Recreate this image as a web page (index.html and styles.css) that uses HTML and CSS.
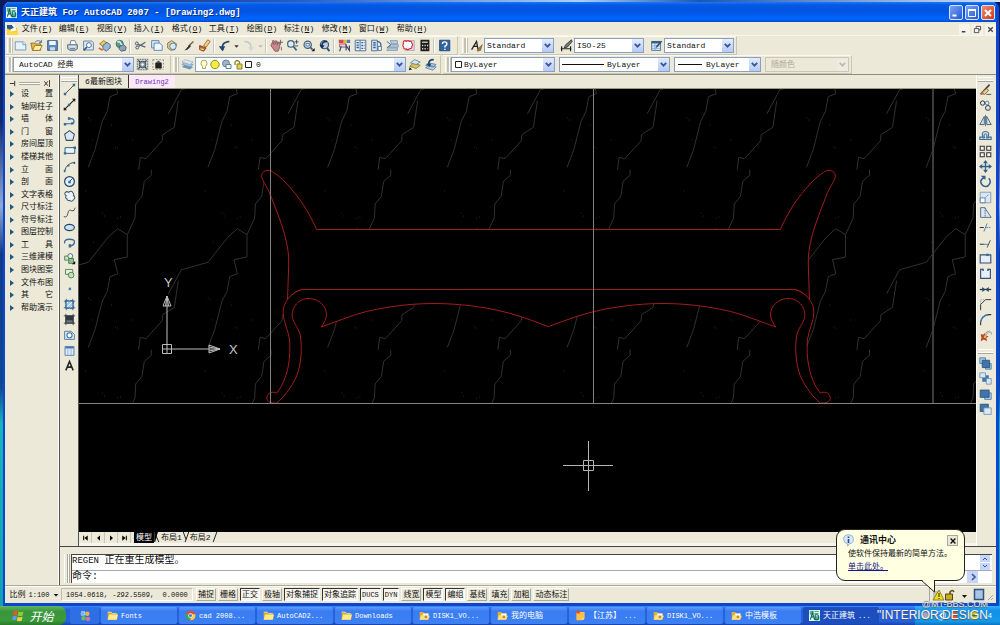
FILE: index.html
```html
<!DOCTYPE html>
<html lang="zh-CN">
<head>
<meta charset="utf-8">
<title>天正建筑 For AutoCAD 2007 - [Drawing2.dwg]</title>
<link rel="stylesheet" href="styles.css">
</head>
<body>
<svg class="defs" aria-hidden="true">
  <defs>
    <symbol id="chev" viewBox="0 0 10 12"><path d="M2.500 4.500 5 7l2.500-2.500" fill="none" stroke="#3a5795" stroke-width="1.700"/></symbol>
    <symbol id="folder" viewBox="0 0 16 16"><path d="M1 3h5l2 2h7v9H1z" fill="#d9a92c"/><path d="M1 14 3 6.500h13L14 14z" fill="#fdeb8e"/><path d="M1 3h5l2 2h6" fill="none" stroke="#fff3b0"/></symbol>
    <symbol id="folderopen" viewBox="0 0 16 16"><path d="M1 3h5l2 2h6v9H1z" fill="#e0ae35"/><path d="M6 5h8l-1 6H6z" fill="#fff"/><path d="M1 14 3 7.500h6l1 1h6L13 14z" fill="#fbe08a"/><circle cx="10" cy="10" r="2" fill="#c98b2b"/></symbol>
    <symbol id="app" viewBox="0 0 16 16"><path d="M0 0h16v16H0z" fill="#e8fbf2"/><path d="M1 1h6v6H1zM9 9h6v6H9z" fill="#5fae94"/><path d="M2 14 5 4l3 10M3 10h4M9 14V7h3q2 0 2 3.500T12 14z" fill="none" stroke="#0d6f5d" stroke-width="1.600"/><path d="M8 2h6M8 5h6" stroke="#0d6f5d"/></symbol>
    <symbol id="tri" viewBox="0 0 6 6"><path d="M1 0v6l4-3z" fill="#1c5a80"/></symbol>
    <g id="vein">
      <path d="M71.300 81.700V87.300L64.300 93.300 62 108.300 55.700 116 55 130 47.300 146.700V169L34.300 171.700 37.700 185.700 30 188.700 27.300 203.300 22.300 213 15 241.700 8.300 259.300"/>
      <path d="M47.300 146.700 37.700 140.700 28.300 149 8.300 174.300-18.300 181.700-31.300 205.700"/>
      <path d="M98.300 12.700 94.300 39.300 82.700 46.700 82.300 52.700 66 70.700 60.300 69.300 58.700 81.700"/>
      <path d="M8 30h1M10 32h1M37 60h1M35 59h1M12 52h1M52 52h1M22 125h1M37 130h1M40 129h1M13 154h1M5 103h1M31 37h1M24 128h1" stroke-width=".8"/>
    </g>
    <g id="veinrow">
      <use href="#vein"/><use href="#vein" x="119.700"/><use href="#vein" x="239.400"/><use href="#vein" x="359.100"/><use href="#vein" x="478.800"/><use href="#vein" x="598.500"/><use href="#vein" x="718.200"/><use href="#vein" x="837.900"/>
    </g>
    <g id="half">
      <path d="M549 229.500H316.700C311 217 306 208 298.300 197.500 290 187 282 177.500 273.500 172.500 268 167.500 260.500 171.500 261.800 177.500 263 182 268 187 273.500 203 283 227 289.500 246 288.700 265L287.500 300.500C290 295.500 296 290.500 302.500 289.500H549"/>
      <path d="M549 289.500H302.500C292 291.500 282 303 283.200 313 283.500 322 288 329 289.700 341 290.500 356 289 372 281 387L276.700 393.200C273 391 267.500 392.500 266.800 397.500 266.500 401 270 403 273.500 403H276.700C284 397 291 388 296.700 376 301.500 363 302 349 300.500 336 298 325 291.500 323 292.200 313 294 303 302 298 309.500 298.500 319 299 326.500 306 326.500 315 326 320 323.500 324 321 327 336 322 352 315 366.500 311.500 409 301.500 450 301 494 309.500 514 313.500 531 320 548.500 326.700"/>
    </g>
  </defs>
</svg>

<div class="desktop">
<div class="window">
  <header class="titlebar">
    <svg class="appicon"><use href="#app"/></svg>
    <h1>天正建筑 For AutoCAD 2007 - [Drawing2.dwg]</h1>
    <div class="winbtns">
      <button aria-label="最小化"><svg viewBox="0 0 12 12"><path d="M2.500 8.500h4" stroke="#fff" stroke-width="2"/></svg></button>
      <button aria-label="最大化"><svg viewBox="0 0 12 12"><path d="M2.500 3h7v6.500h-7z" fill="none" stroke="#fff"/><path d="M2 3h8" stroke="#fff" stroke-width="2"/></svg></button>
      <button class="close" aria-label="关闭"><svg viewBox="0 0 12 12"><path d="m3 3 6 6M9 3 3 9" stroke="#fff" stroke-width="1.800"/></svg></button>
    </div>
  </header>

  <nav class="menubar">
    <svg class="docicon" viewBox="0 0 16 16"><path d="M0 6h15v10H0z" fill="#f5c71d"/><path d="m4 3 7-2 3 9-8 2z" fill="#fff"/><path d="M0 2h7l3 4-6 3-4-2z" fill="#28568e"/><path d="M0 9h5l2 3h9v4H0z" fill="#ffd83a"/></svg>
    <button>文件(<u>F</u>)</button><button>编辑(<u>E</u>)</button><button>视图(<u>V</u>)</button><button>插入(<u>I</u>)</button><button>格式(<u>O</u>)</button><button>工具(<u>T</u>)</button><button>绘图(<u>D</u>)</button><button>标注(<u>N</u>)</button><button>修改(<u>M</u>)</button><button>窗口(<u>W</u>)</button><button>帮助(<u>H</u>)</button>
    <div class="mdi">
      <button aria-label="最小化文档"><svg viewBox="0 0 10 10"><path d="M2 7.500h4" stroke="#444" stroke-width="1.500"/></svg></button>
      <button aria-label="还原文档"><svg viewBox="0 0 10 10"><path d="M3.500 3.500V1.500h5v4H6.500M1.500 4h5v4.500h-5z" fill="none" stroke="#444"/></svg></button>
      <button aria-label="关闭文档"><svg viewBox="0 0 10 10"><path d="m2.500 2.500 5 5M7.500 2.500l-5 5" stroke="#444" stroke-width="1.500"/></svg></button>
    </div>
  </nav>

  <div class="bar">
    <div class="group wide">
      <i class="grip"></i>
      <button class="t" aria-label="新建"><svg viewBox="0 0 16 16"><path d="M1.500 3.500h10l3 3v7h-13z" fill="#e8f2fc" stroke="#5d8cb5"/><path d="M11 3.500v3.500h3.500" fill="#fff" stroke="#5d8cb5"/></svg></button>
      <button class="t" aria-label="打开"><svg viewBox="0 0 16 16"><path d="M1 5h5l1 1h6v8H3z" fill="#e7b64c" stroke="#8b6a1f"/><path d="m3 14 3-6h9l-3 6z" fill="#fff0a8" stroke="#8b6a1f"/><path d="M6 4q4-4 8 0M14 1v3.500h-3" fill="none" stroke="#356596"/></svg></button>
      <button class="t" aria-label="保存"><svg viewBox="0 0 16 16"><path d="M2 2h12v12H2z" fill="#5d8cc0" stroke="#27517f"/><path d="M4 2.500h8v5H4z" fill="#eef5fc"/><path d="M5 10h6v4H5z" fill="#cfdbe8"/></svg></button>
      <i class="sep"></i>
      <button class="t" aria-label="打印"><svg viewBox="0 0 16 16"><path d="M5 7 6 2h5l2 5" fill="#fff" stroke="#59718c"/><path d="M2 7h12v5l-3 2H5l-3-2z" fill="#b9c7d8" stroke="#485f7c"/><path d="M4 9.500h8" stroke="#fff"/><path d="M5 12h6" stroke="#485f7c"/></svg></button>
      <button class="t" aria-label="打印预览"><svg viewBox="0 0 16 16"><path d="M2 2.500h10l2 2v9H2z" fill="#dceafa" stroke="#4a73a1"/><circle cx="8.500" cy="7.500" r="3" fill="#fff" stroke="#34567d"/><path d="m6 10-4 4" stroke="#34567d" stroke-width="1.800"/></svg></button>
      <button class="t" aria-label="发布"><svg viewBox="0 0 16 16"><path d="m2 6 5-4 4 3-5 4z" fill="#f0cd51" stroke="#8b6b1c"/><path d="m6 8 5-4 4 3v4l-5 4-4-3z" fill="#9bb8d9" stroke="#3d5f89"/><path d="m1 11 5 3" stroke="#d36b2c" stroke-width="2"/></svg></button>
      <button class="t" aria-label="三维 DWF"><svg viewBox="0 0 16 16"><circle cx="7" cy="6" r="4.500" fill="#58a06a" stroke="#376a8a"/><path d="M4 4q3-2 4 1t3 2" stroke="#cfe8f6" stroke-width="2" fill="none"/><path d="m7 9 5-2 3 3-1 4-5 1-3-3z" fill="#8ba3c0" stroke="#39516e"/></svg></button>
      <i class="sep"></i>
      <button class="t" aria-label="剪切"><svg viewBox="0 0 16 16"><path d="m14 4-8 5M14 10 5 6.500" stroke="#5a6673" stroke-width="1.600"/><circle cx="3.500" cy="5.500" r="1.800" fill="none" stroke="#27425f"/><circle cx="4" cy="10.500" r="1.800" fill="none" stroke="#27425f"/></svg></button>
      <button class="t" aria-label="复制"><svg viewBox="0 0 16 16"><path d="M2 2h9v9H2z" fill="#dceafa" stroke="#4a73a1"/><path d="M5 5h7l3 3v6H5z" fill="#eef6fd" stroke="#4a73a1"/></svg></button>
      <button class="t" aria-label="粘贴"><svg viewBox="0 0 16 16"><path d="m2 5 5-3 6 4-2 7-5 1-4-3z" fill="#e5cf8e" stroke="#7a6a35"/><circle cx="8.500" cy="9" r="4" fill="#d9e8f7" stroke="#4b6e94"/></svg></button>
      <button class="t" aria-label="特性匹配"><svg viewBox="0 0 16 16"><path d="m14 3-6 6" stroke="#6b5a44" stroke-width="1.600"/><path d="m9.500 7-6.500 7 4-1 4-4z" fill="#2e2c2a"/></svg></button>
      <button class="t" aria-label="块编辑器"><svg viewBox="0 0 16 16"><path d="m7 8 5-7 3 2-5 7z" fill="#f6d67c" stroke="#9b5a22"/><path d="m2 8 8 3-3 4-5-2z" fill="#c9662e" stroke="#773515"/><path d="m3 12 4 1" stroke="#ffe09c" stroke-width="1.500"/></svg></button>
      <i class="sep"></i>
      <button class="t" aria-label="放弃"><svg viewBox="0 0 16 16"><path d="M6 14Q3 4 14 3" fill="none" stroke="#21436c" stroke-width="2"/><path d="m1 9 4.500 6L9 9z" fill="#21436c"/></svg></button>
      <button class="drop" aria-label="放弃列表"><svg viewBox="0 0 8 16"><path d="M1.500 7h5L4 10z" fill="#333"/></svg></button>
      <button class="t" aria-label="重做"><svg viewBox="0 0 16 16"><path d="M3 3q9 0 8 9" fill="none" stroke="#bfc6cb" stroke-width="1.800"/><path d="m7 10 4 5 4-5z" fill="#d3d8d9"/></svg></button>
      <button class="drop" aria-label="重做列表"><svg viewBox="0 0 8 16"><path d="M1.500 7h5L4 10z" fill="#bbb"/></svg></button>
      <i class="sep"></i>
      <button class="t" aria-label="实时平移"><svg viewBox="0 0 16 16"><path d="m3 4 2 3-2-5h2l2 4V2l2 1v4l1-3 2 1v5l-2 5H6L1 8z" fill="#c08a8e" stroke="#8c4e57"/><path d="M13 1v6M10 4h6M14 10v4" stroke="#555"/></svg></button>
      <button class="t" aria-label="实时缩放"><svg viewBox="0 0 16 16"><circle cx="6" cy="6" r="4" fill="#dcebf8" stroke="#42627f" stroke-width="1.500"/><path d="m9 9 4 5" stroke="#42627f" stroke-width="2.200"/><path d="M10.500 3.500h5M13 1v5M11 8.500h4" stroke="#26394f"/></svg></button>
      <button class="t" aria-label="窗口缩放"><svg viewBox="0 0 16 16"><circle cx="7" cy="7" r="4.500" fill="#cfe2f4" stroke="#42627f" stroke-width="1.500"/><path d="M5 5.500h4v3H5z" fill="#fff" stroke="#42627f"/><path d="m10 10 3 3" stroke="#42627f" stroke-width="2.200"/><path d="M15.500 11v4h-4z" fill="#111"/></svg></button>
      <button class="t" aria-label="缩放上一个"><svg viewBox="0 0 16 16"><circle cx="8" cy="7" r="5" fill="#b8cde2" stroke="#34567d" stroke-width="1.500"/><path d="m11 11 3 4" stroke="#34567d" stroke-width="2.500"/><path d="M11 3Q4 3 5 9" fill="none" stroke="#122d50" stroke-width="1.800"/><path d="m2 7 3 5 3-4z" fill="#122d50"/></svg></button>
      <i class="sep"></i>
      <button class="t" aria-label="特性"><svg viewBox="0 0 16 16"><path d="M1 1h6v4H1z" fill="#d8474b"/><path d="M7 1h4v4H7z" fill="#e0b838"/><path d="M11 1h4v4h-4z" fill="#507dbb"/><path d="M2 6h8v4H2z" fill="#e8c7cc" stroke="#8a5566"/><path d="m4 9-2 6M10 14V8l4 6V8" fill="none" stroke="#394f73" stroke-width="1.500"/></svg></button>
      <button class="t" aria-label="设计中心"><svg viewBox="0 0 16 16"><path d="M1.500 1.500h13v13h-13z" fill="#e9f2fb" stroke="#315f8e"/><path d="M7.500 2v12" stroke="#315f8e"/><path d="M3 4.500h3M3 7.500h3M3 10.500h3M9 4.500h2M12 4.500h1M9 8h2M12 8h1M9 11.500h2M12 11.500h1" stroke="#315f8e" stroke-width="1.700"/></svg></button>
      <button class="t" aria-label="工具选项板"><svg viewBox="0 0 16 16"><path d="M2 1.500h7v13H2z" fill="#d8e7f6" stroke="#315f8e"/><path d="M4 4.500h3M4 7.500h3M4 10.500h3" stroke="#315f8e" stroke-width="1.800"/><path d="M9 3q6 1 4 7" fill="none" stroke="#315f8e" stroke-width="1.500"/><path d="M10 9h4v5h-4z" fill="#fff" stroke="#315f8e"/></svg></button>
      <button class="t" aria-label="图纸集"><svg viewBox="0 0 16 16"><path d="M5 2h9v4H7zM6 7h9v3H3zM3 11h11v3H1z" fill="#b9cfe3" stroke="#7793ae"/><path d="m1 3 5 4-5 4" fill="none" stroke="#48698c" stroke-width="1.200"/></svg></button>
      <button class="t" aria-label="标记集"><svg viewBox="0 0 16 16"><path d="M4 2h11v12H4z" fill="#f0dce2" stroke="#9b9aa8"/><path d="M2 3q2-2 3 0 3-2 4 0 3-1 3 2 2 2 0 4 1 3-3 3-2 2-4 0-3 1-3-2-2-2 0-4-1-1 0-3z" fill="#fff" stroke="#d02d45" stroke-width="1.400"/></svg></button>
      <button class="t" aria-label="计算器"><svg viewBox="0 0 16 16"><path d="M3 1h11v14H3z" fill="#1d1d1d"/><path d="M5 3h7v2H5z" fill="#b3c997"/><path d="M5 8h1.500M8 8h1.500M11 8h1.500M5 12h1.500M8 12h1.500" stroke="#ddd" stroke-width="1.800"/><path d="M11 12h1.500" stroke="#d44" stroke-width="1.800"/></svg></button>
      <i class="sep"></i>
      <button class="t" aria-label="帮助"><svg viewBox="0 0 16 16"><path d="M2 1.500h12.500v13H2z" fill="#2f66a2" stroke="#173d6c"/><path d="M5.500 6q0-2.500 2.700-2.500T11 6q0 1.300-2.500 3v1.500M8.500 12v1.500" fill="none" stroke="#fff" stroke-width="1.700"/></svg></button>
    </div>
    <div class="group">
      <i class="grip"></i>
      <button class="t" aria-label="文字样式"><svg viewBox="0 0 16 16"><path d="m2 13 6-10 2 10M4 9h5" fill="none" stroke="#222" stroke-width="1.600"/><path d="m15 7-5 5-1 3 4-1z" fill="#a87a3a" stroke="#4e3717" stroke-width=".6"/></svg></button>
      <label class="combo c70"><select aria-label="文字样式"><option>Standard</option></select><span class="arrow"><svg><use href="#chev"/></svg></span></label>
      <i class="sep"></i>
      <button class="t" aria-label="标注样式"><svg viewBox="0 0 16 16"><path d="M1 12h13M2 9v6M13 9v6" stroke="#222" stroke-width="1.500"/><path d="m14 1-7 6-2 4 4-1 6-7z" fill="#777" stroke="#333"/></svg></button>
      <label class="combo c70"><select aria-label="标注样式"><option>ISO-25</option></select><span class="arrow"><svg><use href="#chev"/></svg></span></label>
      <i class="sep"></i>
      <button class="t" aria-label="表格样式"><svg viewBox="0 0 16 16"><path d="M2 3h11v11H2z" fill="#e4effb" stroke="#315f8e"/><path d="M2 4h11" stroke="#315f8e" stroke-width="3"/><path d="M2 8.500h11M2 11.500h11M6 6v8" stroke="#7aa1c6"/><path d="m15 3-6 7-2 1 1-3 6-6z" fill="#334d68"/></svg></button>
      <label class="combo c70"><select aria-label="表格样式"><option>Standard</option></select><span class="arrow"><svg><use href="#chev"/></svg></span></label>
    </div>
  </div>

  <div class="bar">
    <div class="group ws">
      <i class="grip"></i>
      <label class="combo c120"><select aria-label="工作空间"><option>AutoCAD 经典</option></select><span class="arrow"><svg><use href="#chev"/></svg></span></label>
      <button class="t" aria-label="工作空间设置"><svg viewBox="0 0 16 16"><path d="M1.500 1.500h13v13h-13z" fill="#c8cdd0" stroke="#555" stroke-dasharray="2 1"/><circle cx="8" cy="8" r="4" fill="#8896a3" stroke="#2b3d50"/><circle cx="8" cy="8" r="1.500" fill="#fff"/><path d="m3 3 2 2M13 3l-2 2M3 13l2-2M13 13l-2-2" stroke="#2b3d50" stroke-width="1.500"/></svg></button>
      <button class="t" aria-label="我的工作空间"><svg viewBox="0 0 16 16"><path d="M1 2h13M1 2v12M14 2v12M1 14h13" stroke="#777" stroke-dasharray="2 2"/><path d="M4 6h8v7H4z" fill="#222"/><path d="m4 6 4-3 4 3z" fill="#555"/></svg></button>
    </div>
    <div class="group layers">
      <i class="grip"></i>
      <button class="t" aria-label="图层特性管理器"><svg viewBox="0 0 16 16"><path d="m1 11 4-3 10 3-4 3z" fill="#6e98bb"/><path d="m1 8 4-3 10 3-4 3z" fill="#a8c3d9" stroke="#557b9d" stroke-width=".6"/><path d="m1 5 4-3 10 3-4 3z" fill="#dae7f0" stroke="#7796b1" stroke-width=".6"/></svg></button>
      <label class="combo grow"><select class="deep" aria-label="图层"><option>0</option></select>
        <span class="over"><svg viewBox="0 0 60 13"><path d="M8 2q3 0 3 3.500 0 1.500-1.500 3v2h-3v-2Q5 7 5 5.500 5 2 8 2z" fill="#ffffb8" stroke="#8a8a55" stroke-width=".8"/><circle cx="19" cy="6.500" r="4.200" fill="#f3ee3c" stroke="#7d8b22"/><circle cx="30" cy="5.500" r="3.500" fill="#9fb6c4" stroke="#637f93"/><path d="M30 6.500h5v4h-5z" fill="#eef4f8" stroke="#637f93"/><path d="M39 7V4q2-3 4.500 0v3" fill="none" stroke="#8a8328" stroke-width="1.300"/><path d="M41 6h5v5h-5z" fill="#ded35b" stroke="#8a8328"/><path d="M49.500 3.500h6v6h-6z" fill="#fff" stroke="#222"/></svg></span>
        <span class="arrow"><svg><use href="#chev"/></svg></span></label>
      <button class="t" aria-label="将对象的图层置为当前"><svg viewBox="0 0 16 16"><path d="m2 10 5-4 8 3-5 4z" fill="#d8c554" stroke="#7d7a2e"/><path d="m3 6 5-4 7 3-5 3z" fill="#d8e5ef" stroke="#557b9d"/><path d="m1 15 4-1-3-3z" fill="#222"/></svg></button>
      <button class="t" aria-label="上一个图层"><svg viewBox="0 0 16 16"><path d="m2 12 4-3 9 2-4 4zM2 9l4-3 9 2-4 3z" fill="#b8cddd" stroke="#557b9d"/><path d="M12 2Q5 2 6 8" fill="none" stroke="#21436c" stroke-width="2"/><path d="m3 7 3.500 4L9 7z" fill="#21436c"/></svg></button>
    </div>
    <div class="group">
      <i class="grip"></i>
      <label class="combo c104"><select class="box" aria-label="颜色"><option>ByLayer</option></select><span class="over"><svg viewBox="0 0 60 13"><path d="M3.500 3.500h6v6h-6z" fill="#fff" stroke="#222"/></svg></span><span class="arrow"><svg><use href="#chev"/></svg></span></label>
      <i class="sep"></i>
      <label class="combo c110"><select class="line1" aria-label="线型"><option>ByLayer</option></select><span class="over"><svg viewBox="0 0 60 13"><path d="M2 6.500h42" stroke="#111"/></svg></span><span class="arrow"><svg><use href="#chev"/></svg></span></label>
      <i class="sep"></i>
      <label class="combo c88"><select class="line2" aria-label="线宽"><option>ByLayer</option></select><span class="over"><svg viewBox="0 0 60 13"><path d="M3 6.500h24" stroke="#111"/></svg></span><span class="arrow"><svg><use href="#chev"/></svg></span></label>
      <i class="sep"></i>
      <label class="combo c84 off"><select aria-label="打印样式" disabled><option>随颜色</option></select><span class="arrow"><svg viewBox="0 0 10 12"><path d="M2.500 4.500 5 7l2.500-2.500" fill="none" stroke="#bbb" stroke-width="1.700"/></svg></span></label>
    </div>
  </div>

  <div class="workspace">
    <aside class="palette">
      <div class="palhead"><svg viewBox="0 0 8 8"><path d="M1 4h5M6.500 1v6" stroke="#222"/></svg><i></i><button aria-label="关闭工具箱"><svg viewBox="0 0 8 8"><path d="m1.500 1.500 4 5M5.500 1.500l-4 5M7.500 0v8" stroke="#222"/></svg></button></div>
      <div class="pallist">
        <button><svg><use href="#tri"/></svg>设　　置</button><button><svg><use href="#tri"/></svg>轴网柱子</button><button><svg><use href="#tri"/></svg>墙　　体</button><button><svg><use href="#tri"/></svg>门　　窗</button><button><svg><use href="#tri"/></svg>房间屋顶</button><button><svg><use href="#tri"/></svg>楼梯其他</button><button><svg><use href="#tri"/></svg>立　　面</button><button><svg><use href="#tri"/></svg>剖　　面</button><button><svg><use href="#tri"/></svg>文字表格</button><button><svg><use href="#tri"/></svg>尺寸标注</button><button><svg><use href="#tri"/></svg>符号标注</button><button><svg><use href="#tri"/></svg>图层控制</button><button><svg><use href="#tri"/></svg>工　　具</button><button><svg><use href="#tri"/></svg>三维建模</button><button><svg><use href="#tri"/></svg>图块图案</button><button><svg><use href="#tri"/></svg>文件布图</button><button><svg><use href="#tri"/></svg>其　　它</button><button><svg><use href="#tri"/></svg>帮助演示</button>
      </div>
    </aside>

    <div class="right">
      <div class="upper">
        <div class="vtool">
          <i class="hgrip"></i>
          <div class="vlist n19">
            <button aria-label="直线"><svg viewBox="0 0 16 16"><path d="M3 13 13 3" stroke="#333"/><path d="M1 12h3v3H1zM12 1h3v3h-3z" fill="#326a98"/></svg></button>
            <button aria-label="构造线"><svg viewBox="0 0 16 16"><path d="M1 15 15 1" stroke="#222" stroke-width="1.400"/><path d="M6 7h3v3H6z" fill="#326a98"/><path d="M1 15v-4l4 4zM15 1v4l-4-4z" fill="#222"/></svg></button>
            <button aria-label="多段线"><svg viewBox="0 0 16 16"><path d="M2 12h9q4-1 2-5-2-2-5-1" fill="none" stroke="#326a98" stroke-width="1.500"/><path d="M1 11h3v3H1zM10 10h3v3h-3zM6 4h3v3H6z" fill="#326a98"/></svg></button>
            <button aria-label="正多边形"><svg viewBox="0 0 16 16"><path d="m8 2 6 4.500L12 14H4L2 6.500z" fill="#dbe9f5" stroke="#3b4f63" stroke-width="1.300"/></svg></button>
            <button aria-label="矩形"><svg viewBox="0 0 16 16"><path d="M2.500 4.500h12v7h-12z" fill="#edf4fa" stroke="#3b5a78" stroke-width="1.200"/><path d="M1 10h3v3H1zM13 3h3v3h-3z" fill="#326a98"/></svg></button>
            <button aria-label="圆弧"><svg viewBox="0 0 16 16"><path d="M2 14Q4 4 14 3" fill="none" stroke="#333"/><path d="M1 12h2v3H1zM5 6h3v2H5zM13 2h2v3h-2z" fill="#326a98"/></svg></button>
            <button aria-label="圆"><svg viewBox="0 0 16 16"><circle cx="8" cy="8" r="6" fill="#e3eff9" stroke="#27496c" stroke-width="1.500"/><path d="m8 8 4-4" stroke="#333"/><path d="M6.500 7h3v3h-3z" fill="#326a98"/></svg></button>
            <button aria-label="修订云线"><svg viewBox="0 0 16 16"><path d="M4 7Q1 5 3 3t4 0q3-3 5 0t1 4q3 2 0 5-2 3-5 1-3 0-3-2-3-1-1-4z" fill="#edf4fa" stroke="#3b5a78" stroke-width="1.300"/></svg></button>
            <button aria-label="样条曲线"><svg viewBox="0 0 16 16"><path d="M1 13Q5 15 6 9t5-3q3 1 4-4" fill="none" stroke="#333"/></svg></button>
            <button aria-label="椭圆"><svg viewBox="0 0 16 16"><ellipse cx="8" cy="8" rx="6" ry="3.800" fill="#cfe2f3" stroke="#27496c" stroke-width="1.400"/></svg></button>
            <button aria-label="椭圆弧"><svg viewBox="0 0 16 16"><path d="M2 9Q1 4 8 4t6 4-5 4" fill="none" stroke="#3b6c96" stroke-width="1.600"/><path d="M7 10h3v4H7z" fill="#326a98"/></svg></button>
            <button aria-label="插入块"><svg viewBox="0 0 16 16"><path d="M2 5h6v5H2z" fill="#cfe5c2" stroke="#3c7546"/><circle cx="9" cy="5" r="3" fill="#e9f3e4" stroke="#3b5a78"/><path d="M7 8h6v6H7z" fill="#92bd8c" stroke="#3c7546"/><path d="M15 11v4h-4z" fill="#111"/></svg></button>
            <button aria-label="创建块"><svg viewBox="0 0 16 16"><path d="M3 3h9v6H3z" fill="#e4f0dc" stroke="#3c7546"/><circle cx="10" cy="10" r="3.500" fill="#c5dfba" stroke="#3c7546"/></svg></button>
            <button aria-label="点"><svg viewBox="0 0 16 16"><path d="M7 7h3v3H7z" fill="#3b88b5"/></svg></button>
            <button aria-label="图案填充"><svg viewBox="0 0 16 16"><path d="M3 3h10v10H3z" fill="#a7c9e2" stroke="#315f8e"/><path d="m3 8 5-5M3 13 13 3M8 13l5-5" stroke="#fff"/><path d="M1 4h14M1 12h14M4 1v14M12 1v14" stroke="#315f8e"/></svg></button>
            <button aria-label="渐变色"><svg viewBox="0 0 16 16"><path d="M3 3h10v10H3z" fill="#2c3946"/><path d="M4 9h8v3H4z" fill="#66788a"/><path d="M1 3.500h14M1 12.500h14M3.500 1v14M12.500 1v14" stroke="#333"/></svg></button>
            <button aria-label="面域"><svg viewBox="0 0 16 16"><path d="M2 4h8l4 4v6H2z" fill="#dbe9f5" stroke="#3b6c96"/><circle cx="8" cy="9" r="3.200" fill="#fff" stroke="#3b6c96" stroke-width="1.300"/></svg></button>
            <button aria-label="表格"><svg viewBox="0 0 16 16"><path d="M2.500 3h11v11h-11z" fill="#dfeaf8" stroke="#4272a8"/><path d="M3 4.500h10" stroke="#4272a8" stroke-width="2"/><path d="M6 5v9M10 5v9" stroke="#8cacd0"/></svg></button>
            <button aria-label="多行文字"><svg viewBox="0 0 16 16"><path d="M3.500 14 8 3l4.500 11M5 10h6" fill="none" stroke="#222" stroke-width="1.900"/></svg></button>
          </div>
        </div>

        <main class="doc">
          <div class="doctabs" role="tablist"><button role="tab" class="lib">6最新图块</button><button role="tab" class="cur">Drawing2</button></div>
          <div class="canvas">
            <svg width="100%" height="100%" role="img" aria-label="图形窗口">
              <g transform="translate(-79 -89)">
                <svg class="veins" x="0" y="0" width="2000" height="403">
                  <use href="#veinrow" x="80" y="-92"/><use href="#veinrow" x="80" y="88"/><use href="#veinrow" x="80" y="268"/>
                </svg>
                <g class="red"><use href="#half"/><use href="#half" transform="translate(1097 0) scale(-1 1)"/></g>
                <path class="guide" d="M270.500 89v314M593.500 89v314M79 403.500h2000"/>
                <path class="guide dim" d="M933 89v314"/>
                <g class="ucs"><path d="M162.500 344.500h9v9h-9zM162 349h56M167 354v-58M167 296l-4 10h8zM220 349l-11-4v8z M209 347l11 2-11 2M165.500 306l1.500-10 1.500 10"/><text x="229" y="354">X</text><text x="164" y="287">Y</text></g>
                <path class="cross" d="M563 465.500h50M588.500 441v50M583.500 460.500h10v10h-10z"/>
              </g>
            </svg>
          </div>
          <div class="layouts">
            <button aria-label="第一个"><svg viewBox="0 0 12 12"><path d="M3.500 3v6" stroke="#111" stroke-width="1.500"/><path d="M9 2.500v7L4.500 6z"/></svg></button><button aria-label="上一个"><svg viewBox="0 0 12 12"><path d="M8 2.500v7L4 6z"/></svg></button><button aria-label="下一个"><svg viewBox="0 0 12 12"><path d="M4 2.500v7L8 6z"/></svg></button><button aria-label="最后一个"><svg viewBox="0 0 12 12"><path d="M8.500 3v6" stroke="#111" stroke-width="1.500"/><path d="M3 2.500v7L7.500 6z"/></svg></button>
            <button class="lt on">模型</button><svg class="slash" viewBox="0 0 6 12"><path d="M0 0h4L1 11H0z"/><path d="M1 2 5 11" fill="none" stroke="#111"/></svg><button class="lt">布局1</button><svg class="slash" viewBox="0 0 6 12"><path d="M6 0 2 11M0 0l3 8" fill="none" stroke="#111"/></svg><button class="lt">布局2</button><svg class="slash" viewBox="0 0 6 12"><path d="M5 0 1 11" fill="none" stroke="#111"/></svg>
          </div>
        </main>

        <div class="vtool modify">
          <i class="hgrip"></i>
          <div class="vlist n17">
            <button aria-label="删除"><svg viewBox="0 0 16 16"><path d="M2 14 13 2" stroke="#4c4438" stroke-width="2"/><path d="m3 12 6-5 3 2-5 5z" fill="#e8cf7f" stroke="#77643a"/><path d="m2 13 3-2 2 3H3z" fill="#c86a6a"/><path d="M9 14h6" stroke="#333"/></svg></button>
            <button aria-label="复制对象"><svg viewBox="0 0 16 16"><circle cx="4.500" cy="5" r="2.700" fill="#dbe9f5" stroke="#333" stroke-width="1.200"/><circle cx="10" cy="5" r="2.300" fill="none" stroke="#3b6c96"/><circle cx="11" cy="11" r="3" fill="#dbe9f5" stroke="#333" stroke-width="1.200"/></svg></button>
            <button aria-label="镜像"><svg viewBox="0 0 16 16"><path d="M6.500 3v10H1zM9.500 3v10H15z" fill="#d6e5f2" stroke="#334a60"/><path d="M8 1v14" stroke="#326a98"/></svg></button>
            <button aria-label="偏移"><svg viewBox="0 0 16 16"><path d="M1 13v-3h4Q2 3 8 3t3 7h4v3z" fill="#cfe2f3" stroke="#3b6c96" stroke-width="1.300"/><path d="M4 11h3q-2-5 1-5t1 5h3" fill="none" stroke="#334a60"/></svg></button>
            <button aria-label="阵列"><svg viewBox="0 0 16 16"><path d="M1.500 1.500h5v5h-5zM9.500 1.500h5v5h-5zM1.500 9.500h5v5h-5zM9.500 9.500h5v5h-5z" fill="#f4f6f8" stroke="#333" stroke-width="1.300"/></svg></button>
            <button aria-label="移动"><svg viewBox="0 0 16 16"><path d="M8 2v12M2 8h12" stroke="#315f8e" stroke-width="1.600"/><path d="m8 0 3 4H5zM8 16l3-4H5zM0 8l4-3v6zM16 8l-4-3v6z" fill="#315f8e"/></svg></button>
            <button aria-label="旋转"><svg viewBox="0 0 16 16"><path d="M12 4q3 3 1 7t-6 3-5-6q1-4 5-5" fill="none" stroke="#315f8e" stroke-width="1.800"/><path d="M2 1h6v5z" fill="#315f8e"/></svg></button>
            <button aria-label="缩放"><svg viewBox="0 0 16 16"><path d="M1.500 1.500h13v13h-13z" fill="#dbe6f3" stroke="#7790b0"/><path d="M1.500 8.500h6v6h-6z" fill="#fff" stroke="#4272a8"/><path d="m8 8 4-4" stroke="#4272a8" stroke-dasharray="2 1"/></svg></button>
            <button aria-label="拉伸"><svg viewBox="0 0 16 16"><path d="M2 2h5l8 12H2z" fill="#dbe6f3" stroke="#3b5a78"/><path d="M7.500 2v12" stroke="#3b5a78" stroke-dasharray="2 1"/></svg></button>
            <button aria-label="修剪"><svg viewBox="0 0 16 16"><path d="M1 8h5" stroke="#333" stroke-width="1.300"/><path d="M9 8h6" stroke="#326a98" stroke-dasharray="2 1"/><path d="m10 3-4 10" stroke="#326a98"/></svg></button>
            <button aria-label="延伸"><svg viewBox="0 0 16 16"><path d="M1 9h5" stroke="#333" stroke-width="1.300"/><path d="M6 9h5" stroke="#326a98"/><path d="m14 4-4 9" stroke="#333"/></svg></button>
            <button aria-label="打断于点"><svg viewBox="0 0 16 16"><path d="M1.500 3.500h13v10h-13z" fill="#e7eff8" stroke="#3b4f78" stroke-width="1.400"/><path d="M9 2h3v3H9z" fill="#326a98"/></svg></button>
            <button aria-label="打断"><svg viewBox="0 0 16 16"><path d="M5 3H2v11h12V3h-3" fill="#e7eff8" stroke="#3b4f78" stroke-width="1.400"/><path d="M4 2h2v3H4zM10 2h2v3h-2z" fill="#326a98"/></svg></button>
            <button aria-label="合并"><svg viewBox="0 0 16 16"><path d="M1 8h14" stroke="#333" stroke-width="1.600"/><path d="M4 5v6l4-3zM12 5v6L8 8z" fill="#244a6c"/></svg></button>
            <button aria-label="倒角"><svg viewBox="0 0 16 16"><path d="M2 15V8l6-6h7" fill="none" stroke="#333" stroke-width="1.200"/><path d="M2 7V2h5" fill="none" stroke="#6b8fae" stroke-dasharray="1 1"/></svg></button>
            <button aria-label="圆角"><svg viewBox="0 0 16 16"><path d="M2 15v-3Q3 3 12 2h3" fill="none" stroke="#333" stroke-width="1.300"/><path d="M2 11Q3 4 11 2" fill="none" stroke="#3b88c5" stroke-width="1.800"/></svg></button>
            <button aria-label="分解"><svg viewBox="0 0 16 16"><path d="m8 8 5-6M8 6q2-5 5-2 3-1 2 3" fill="none" stroke="#888"/><path d="m2 6 3 1 2-2 1 3 4 1-3 2 1 4-4-2-4 2 1-4z" fill="#b44a2c"/><path d="M6 8h3v3H6z" fill="#e9b353"/></svg></button>
          </div>
          <i class="hgrip second"></i>
          <div class="vlist n4">
            <button aria-label="前置"><svg viewBox="0 0 16 16"><path d="M1 1h7v7H1zM8 8h7v7H8z" fill="#aecbe3" stroke="#4272a8"/><path d="M4 4h9v9H4z" fill="#3f75a8" stroke="#24517c"/></svg></button>
            <button aria-label="后置"><svg viewBox="0 0 16 16"><path d="M4 4h8v8H4z" fill="#3f75a8"/><path d="M1 1h7v6H1zM9 8h6v7H9z" fill="#d6e5f2" stroke="#6c8fb3"/></svg></button>
            <button aria-label="置于对象之上"><svg viewBox="0 0 16 16"><path d="M7 6h8v8H7z" fill="#b8d0e5" stroke="#4272a8"/><path d="M1.500 2.500h11v9h-11z" fill="#3f75a8" stroke="#24517c"/></svg></button>
            <button aria-label="置于对象之下"><svg viewBox="0 0 16 16"><path d="M1.500 1.500h10v9h-10z" fill="#3f75a8" stroke="#24517c"/><path d="M6 6h9v8H6z" fill="#dce8f3" stroke="#6c8fb3"/></svg></button>
          </div>
        </div>
      </div>

      <section class="command">
        <i class="cgrip"></i>
        <div class="cbox">
          <div class="log"><output>REGEN <b>正在重生成模型。</b></output><div class="spin"><button aria-label="上移"><svg viewBox="0 0 10 7"><path d="m3 5 2-2 2 2" fill="none" stroke="#3a5795"/></svg></button><button aria-label="下移"><svg viewBox="0 0 10 7"><path d="m3 2 2 2 2-2" fill="none" stroke="#3a5795"/></svg></button></div></div>
          <div class="prompt"><label for="cmd">命令:</label><input id="cmd" type="text"><button class="next" aria-label="右移"><svg viewBox="0 0 10 12"><path d="m4 3 3 3-3 3" fill="none" stroke="#3a5795" stroke-width="1.600"/></svg></button></div>
        </div>
      </section>
    </div>
  </div>

  <footer class="status">
    <button class="scale">比例 <small>1:100</small><svg viewBox="0 0 8 8"><path d="M1 2.500h6L4 6z"/></svg></button>
    <output class="coords">1054.0618, -292.5509,&nbsp; 0.0000</output>
    <div class="toggles"><button>捕捉</button><button>栅格</button><button class="in">正交</button><button>极轴</button><button class="in">对象捕捉</button><button class="in">对象追踪</button><button class="in"><small>DUCS</small></button><button class="in"><small>DYN</small></button><button>线宽</button><button class="in">模型</button><button class="in">编组</button><button>基线</button><button>填充</button><button>加粗</button><button>动态标注</button></div>
    <div class="tray">
      <svg viewBox="0 0 66 14"><path d="M3 3h6v8H3z" fill="#9aa" opacity=".6"/><path d="m9 2 5 10H3z" fill="#f5dd24" stroke="#7d6b10" stroke-width=".8"/><path d="M9 5v4M9 10v1" stroke="#222"/><path d="M20 7V4q2.500-3 4 0" fill="none" stroke="#55480f" stroke-width="1.500"/><path d="M15.500 6h7v6h-7z" fill="#cda920" stroke="#55480f"/><path d="M32 7h5l-2.500 3z" fill="#111"/><path d="M44.500 1.500h9v10h-9z" fill="#a9c4e4" stroke="#2d547f" stroke-width="1.500"/><path d="m58 12 5-5M61 12l2-2" stroke="#aaa692"/></svg>
    </div>
  </footer>
</div>
</div>

<div class="taskbar">
  <button class="start"><svg viewBox="0 0 16 16"><path d="M2 3q3-2 5-.500L6 8Q4 6.500 1 8z" fill="#e9532d"/><path d="M8 3q3 1.500 6 0l-1 5q-3 1.500-6 0z" fill="#8ccb3c"/><path d="M1 9q3-1.500 5 0l-1 5q-2-1.500-5 0z" fill="#5d9dea"/><path d="M7 9.500q3 1.500 6 0l-1 5q-3 1-6 0z" fill="#f7cf3c"/></svg>开始</button>
  <button class="ql" aria-label="快速启动"><svg viewBox="0 0 16 16"><path d="M3 2h5v5H3z" fill="#fff"/><circle cx="5" cy="5" r="3" fill="#7fb8ee"/><circle cx="11" cy="5" r="3" fill="#e8b73a"/><circle cx="6" cy="11" r="3" fill="#6bbb59"/><circle cx="12" cy="12" r="3" fill="#d96fa9"/></svg></button>
  <div class="tasks">
    <button><svg><use href="#folder"/></svg><small>Fonts</small></button>
    <button><svg viewBox="0 0 16 16"><circle cx="8" cy="8" r="7" fill="#e7483a"/><path d="M8 8 1.500 5A7 7 0 0 0 8 15z" fill="#3fa652"/><path d="M8 8 8 15A7 7 0 0 0 15 6H8z" fill="#f5cc39"/><circle cx="8" cy="8" r="3.200" fill="#fff"/><circle cx="8" cy="8" r="2.300" fill="#3e7fd8"/></svg><small>cad 2008...</small></button>
    <button><svg><use href="#folder"/></svg><small>AutoCAD2...</small></button>
    <button><svg><use href="#folder"/></svg><small>Downloads</small></button>
    <button><svg><use href="#folderopen"/></svg><small>DISK1_VO...</small></button>
    <button><svg><use href="#folderopen"/></svg>我的电脑</button>
    <button><svg viewBox="0 0 16 16"><path d="M2 3h12v9l-3 3H2z" fill="#ffc044"/><path d="M11 15v-3h3z" fill="#fff0b8"/><path d="M2 1h5v4H2z" fill="#d8502f"/></svg>【江苏】<small>...</small></button>
    <button><svg><use href="#folderopen"/></svg><small>DISK1_VO...</small></button>
    <button><svg><use href="#folderopen"/></svg>中浩模板</button>
    <button class="active"><svg><use href="#app"/></svg>天正建筑<small>...</small></button>
  </div>
  <div class="systray"><svg viewBox="0 0 70 16"><path d="M3 4h8v7H3z" fill="#9ba8c8"/><circle cx="24" cy="8" r="5" fill="#2f8de0" stroke="#bfe2fa"/><path d="m26 5-3 3 3 3" fill="none" stroke="#fff" stroke-width="1.500"/><path d="m38 2 5 5-3 7-6-4z" fill="#d8572e"/><circle cx="60" cy="8" r="5" fill="#d6cf2f"/><path d="M58 8h4" stroke="#37791f" stroke-width="2"/></svg><small>4</small></div>
</div>

<div class="balloon" role="status">
  <div class="bhead"><svg viewBox="0 0 16 16"><path d="M8 1q6 0 6 5.500T9 12l-2 3-.500-3Q2 11 2 6.500 2 1 8 1z" fill="#d9e8fa" stroke="#8ba3c8"/><path d="M8 3v2M8 6v5" stroke="#1c4da0" stroke-width="2"/></svg><strong>通讯中心</strong><button aria-label="关闭"><svg viewBox="0 0 10 10"><path d="m2 2 6 6M8 2 2 8" stroke="#111" stroke-width="1.700"/></svg></button></div>
  <p>使软件保持最新的简单方法。</p>
  <p><a href="#">单击此处。</a></p>
  <svg class="tail" viewBox="0 0 16 15"><path d="M1 0 14.500 13V0" fill="#ffffe1"/><path d="M1 1 14.500 13V1" fill="none" stroke="#222"/></svg>
</div>
<div class="watermark"><span>@MT-BBS.COM</span><strong>"INTERIOR DESIGN</strong></div>
</body>
</html>
```
FILE: styles.css
```css
* { box-sizing: border-box; }
html, body { height: 100%; }
body {
  margin: 0;
  display: flex;
  flex-direction: column;
  overflow: hidden;
  position: relative;
  font: 8px/12px "Liberation Mono", "Noto Sans CJK SC", monospace;
  color: #111;
}
button, select, input { font: inherit; color: inherit; margin: 0; padding: 0; border: 0; background: none; white-space: nowrap; }
button { display: flex; align-items: center; justify-content: center; }
svg { display: block; flex: none; }
small { font-size: 7px; }
i { display: block; flex: none; }
.defs { position: absolute; width: 0; height: 0; }

.desktop {
  flex: 1;
  min-height: 0;
  display: flex;
  padding: 2px 1px 0 3px;
  background:
    linear-gradient(90deg, #0b1f5c 0, #2a5cc4 30%, #a8d0ff 58%, #1c56b4 70%, #cfe2ff 100%) top / 100% 2px no-repeat,
    linear-gradient(#0a1a54 0, #14286c 20%, #8fa9d4 34%, #123a86 42%, #0d4a90 64%, #17b4bd 70%, #12a0b0 100%);
}
.window {
  flex: 1;
  min-width: 0;
  display: flex;
  flex-direction: column;
  background: #ece9d8;
  border: solid #0a46d2;
  border-width: 0 3px 3px 2px;
  border-radius: 6px 6px 0 0;
  overflow: hidden;
}

.titlebar {
  height: 20px;
  display: flex;
  align-items: center;
  padding: 1px 1px 0;
  gap: 4px;
  background: linear-gradient(#1c78f5 0, #0458e4 15%, #0254e3 50%, #0066ff 85%, #0448c8 100%);
  color: #fff;
}
.titlebar h1 { margin: 0; flex: 1; font-size: 9px; white-space: nowrap; text-shadow: 1px 1px #0b2f84; }
.appicon { width: 11px; height: 11px; }
.winbtns { display: flex; gap: 2px; }
.winbtns button { width: 14px; height: 15px; border: 1px solid #d7e4fb; border-radius: 2px; background: linear-gradient(135deg, #7aa3f3, #2458d8); }
.winbtns .close { background: linear-gradient(135deg, #ee8c70, #cf3a14); }
.winbtns svg { width: 12px; height: 12px; }

.menubar { height: 14px; display: flex; align-items: center; padding: 1px 0 0 2px; border-bottom: 1px solid #f8f6ec; }
.menubar > button { width: 30px; margin-right: 7px; }
.menubar > button:nth-of-type(even) { margin-right: 8px; }
.docicon { width: 11px; height: 12px; margin-right: 4px; }
.mdi { margin-left: auto; display: flex; gap: 2px; }
.mdi button { width: 11px; height: 11px; background: #f5f3ea; }
.mdi svg { width: 9px; height: 9px; }

.bar { height: 19px; display: flex; align-items: stretch; background: #ece9d8; }
.bar + .bar { height: 20px; border-bottom: 1px solid #8f8d80; }
.group { display: flex; align-items: center; padding: 0 2px; border: solid; border-width: 1px 1px 1px 0; border-color: #faf9f2 #c9c6b6 #c9c6b6 #fff; }
.group:last-child { margin-left: 2px; }
.wide { width: 453px; }
.ws { width: 166px; }
.layers { width: 270px; }
.grip { width: 5px; height: 15px; border: solid #fff; border-width: 0 1px; margin-right: 1px; box-shadow: 1px 0 #c4c1b0, inset -2px 0 #c4c1b0; }
.wide .grip { margin-right: 0; }
.t { flex: none; width: 16px; height: 16px; }
.t svg { width: 13px; height: 13px; }
.drop { flex: none; width: 8px; height: 16px; }
.drop svg { width: 7px; height: 14px; }
.sep { width: 4px; height: 14px; }
.wide .sep { background: linear-gradient(90deg, transparent 1px, #c9c6b6 1px 2px, #fff 2px 3px, transparent 3px); }

.combo { display: grid; flex: none; height: 15px; border: 1px solid #8aa0bd; background: #fff; }
.combo > * { grid-area: 1 / 1; min-width: 0; }
.combo select { appearance: none; width: 100%; height: 13px; line-height: 13px; padding-left: 2px; background: transparent; }
.combo option { color: #111; }
.over { pointer-events: none; }
.over svg { width: 60px; height: 13px; }
.arrow { justify-self: end; width: 11px; height: 13px; background: linear-gradient(#e3ebff, #b5caf8); pointer-events: none; }
.arrow svg { width: 11px; height: 13px; }
.c70 { width: 70px; }
.c120 { width: 121px; }
.c120 select { padding-left: 5px; }
.c104 { width: 104px; }
.c110 { width: 111px; }
.c88 { width: 87px; }
.c84 { width: 84px; }
.grow { flex: 1; }
.combo .deep { padding-left: 60px; }
.combo .box { padding-left: 12px; }
.combo .line1 { padding-left: 47px; }
.combo .line2 { padding-left: 31px; }
.off { background: #ece9d8; border-color: #c9c7ba; color: #aca899; }
.off select { padding-left: 5px; opacity: 1; }
.off .arrow { background: #eeece0; }

.workspace { flex: 1; min-height: 0; display: flex; }
.palette { flex: none; width: 55px; padding-top: 3px; border-right: 1px solid #555; box-shadow: inset -1px 0 #fff; }
.palhead { height: 10px; display: flex; align-items: center; justify-content: center; gap: 3px; padding: 0 9px 0 4px; }
.palhead > svg, .palhead button svg { width: 7px; height: 7px; }
.palhead i { flex: 1; height: 3px; border: solid #aca899; border-width: 1px 0; background: #fff; }
.pallist { display: grid; grid-auto-rows: 1fr; height: 226px; }
.pallist button { justify-content: flex-start; gap: 6px; padding-left: 4px; }
.pallist svg { width: 6px; height: 6px; }

.right { flex: 1; min-width: 0; display: flex; flex-direction: column; }
.upper { flex: 1; min-height: 0; display: flex; border-bottom: 1px solid #444; }
.vtool { flex: none; width: 18px; padding: 2px 1px; }
.vtool.modify { width: 19px; padding: 2px 3px 2px 1px; }
.hgrip { height: 4px; border: solid #fff; border-width: 1px 0; box-shadow: 0 1px #aca899; margin-bottom: 1px; }
.second { margin: 6px 0 3px; }
.vlist { display: grid; grid-auto-rows: 1fr; justify-items: center; }
.vlist button { width: 15px; }
.vlist svg { width: 13px; height: 13px; }
.n19 { height: 291px; }
.n17 { height: 261px; }
.n4 { height: 61px; }

.doc { flex: 1; min-width: 0; display: flex; flex-direction: column; border-left: 1px solid #555; border-right: 1px solid #fff; }
.doctabs { height: 14px; display: flex; border-bottom: 1px solid #9a9a88; }
.doctabs button { height: 13px; }
.lib { width: 50px; border-right: 1px solid #333; }
.doctabs .cur { width: 46px; background: #fce9f8; color: #6a35b8; font-size: 7px; }
.canvas { flex: 1; min-height: 0; background: #000; overflow: hidden; }
.veins { fill: none; stroke: #313131; stroke-width: 1; }
.red { fill: #000; stroke: #a51c1c; stroke-width: 1; }
.guide { stroke: #828282; fill: none; }
.dim { stroke: #3c3c3c; stroke-width: 2; }
.ucs path { stroke: #bdbdbd; fill: none; }
.ucs text { fill: #c8c8c8; font: 13px "Liberation Sans", sans-serif; }
.cross { stroke: #b5b5b5; fill: none; }
.layouts { height: 14px; display: flex; align-items: flex-start; border-bottom: 3px solid #f7f5ec; }
.layouts button { height: 11px; width: 13px; border-right: 1px solid #c9c6b6; }
.layouts svg { width: 9px; height: 10px; }
.layouts .lt { width: auto; border: 0; padding: 0 1px; }
.layouts .on { background: #000; color: #fff; margin-left: 3px; padding: 0 2px; }
.layouts .slash { width: 6px; height: 11px; }

.command { flex: none; height: 38px; display: flex; padding: 7px 4px 2px 4px; }
.cgrip { width: 5px; border: solid #fff; border-width: 0 1px; box-shadow: inset -1px 0 #aca899, 1px 0 #aca899; margin-right: 2px; }
.cbox { flex: 1; min-width: 0; display: flex; flex-direction: column; border: solid #444; border-width: 1px 0 0 1px; background: #fff; font-size: 9px; }
.log { flex: 1; display: flex; justify-content: space-between; border-bottom: 1px solid #aaa; }
.log b { font-weight: 400; font-size: 10px; }
.spin { display: flex; flex-direction: column; gap: 1px; padding-right: 2px; }
.spin button { width: 10px; height: 7px; background: #c6d5fa; }
.spin svg { width: 10px; height: 7px; }
.prompt { height: 13px; display: flex; align-items: center; }
.prompt label { font-size: 10px; }
.prompt input { flex: 1; min-width: 0; height: 12px; outline: 0; }
.prompt .next { width: 11px; height: 12px; margin-right: 14px; background: #c6d5fa; }
.next svg { width: 10px; height: 12px; }

.status { flex: none; height: 18px; display: flex; align-items: center; border-top: 1px solid #aca899; box-shadow: inset 0 1px #fff; }
.scale { width: 56px; padding-left: 2px; gap: 3px; }
.scale svg { width: 6px; height: 6px; }
.coords { width: 132px; height: 13px; line-height: 13px; padding-left: 4px; font-size: 7px; white-space: nowrap; border: 1px solid; border-color: #c0bdae #fff #fff #c0bdae; }
.toggles { display: flex; gap: 2px; padding-left: 3px; }
.toggles button { height: 13px; padding: 0 1px; border: 1px solid; border-color: #fff #aca899 #aca899 #fff; }
.toggles .in { border-color: #333 #fff #fff #333; background: #f6f4ec; }
.tray { margin-left: auto; height: 14px; border-left: 1px solid #aca899; }
.tray svg { width: 66px; height: 14px; }

.taskbar {
  flex: none;
  height: 19px;
  display: flex;
  align-items: center;
  background: linear-gradient(#3f8cf3, #245edb 20%, #2663e0 80%, #1941a5);
  color: #fff;
}
.start {
  width: 66px;
  height: 19px;
  gap: 4px;
  background: linear-gradient(#5fb65f, #3a953a 30%, #3c9a3c 75%, #2a7a2a);
  border-radius: 0 7px 7px 0;
  font: italic 12px/19px "Noto Sans CJK SC", sans-serif;
}
.start svg { width: 13px; height: 13px; }
.ql { width: 29px; height: 17px; margin: 0 2px 0 4px; background: #2f6fe6; border-radius: 2px; }
.ql svg { width: 12px; height: 12px; }
.tasks { display: flex; gap: 2px; }
.tasks button { width: 76px; height: 17px; justify-content: flex-start; gap: 3px; padding-left: 6px; border-radius: 2px; background: linear-gradient(#5c9bfa, #3a7cf2 25%, #3c81f3); }
.tasks .active { background: #1c4fbd; }
.tasks svg { width: 11px; height: 11px; }
.systray { margin-left: auto; height: 19px; display: flex; align-items: center; gap: 5px; padding: 0 8px 0 4px; background: linear-gradient(#33b4f4, #1290e9 25%, #139ae9 80%, #0f72c0); }
.systray svg { width: 64px; height: 15px; }

.balloon {
  position: absolute;
  right: 35px;
  bottom: 44px;
  width: 129px;
  height: 52px;
  padding: 4px 6px 0 11px;
  background: #ffffe1;
  border: 1px solid #222;
  border-radius: 9px;
}
.bhead { display: flex; align-items: center; height: 13px; margin-left: -6px; margin-bottom: 1px; }
.bhead > svg { width: 13px; height: 13px; margin-right: 5px; }
.bhead strong { flex: 1; font-size: 9px; }
.bhead button { width: 11px; height: 11px; border: 1px solid #aca899; background: #ece9d8; }
.bhead button svg { width: 8px; height: 8px; }
.balloon p { margin: 0 0 1px; white-space: nowrap; }
.balloon a { color: #14148c; }
.tail { position: absolute; right: 28px; top: 49px; width: 16px; height: 15px; }

.watermark {
  position: absolute;
  right: 12px;
  bottom: 3px;
  display: flex;
  flex-direction: column;
  align-items: flex-end;
  font-family: "Liberation Sans", sans-serif;
  color: #f2f4f8;
  text-shadow: 0 1px 1px #555;
  pointer-events: none;
}
.watermark span { font-size: 9px; line-height: 10px; color: #e2e4ea; }
.watermark strong { font-size: 12px; line-height: 13px; font-weight: 400; }
```
